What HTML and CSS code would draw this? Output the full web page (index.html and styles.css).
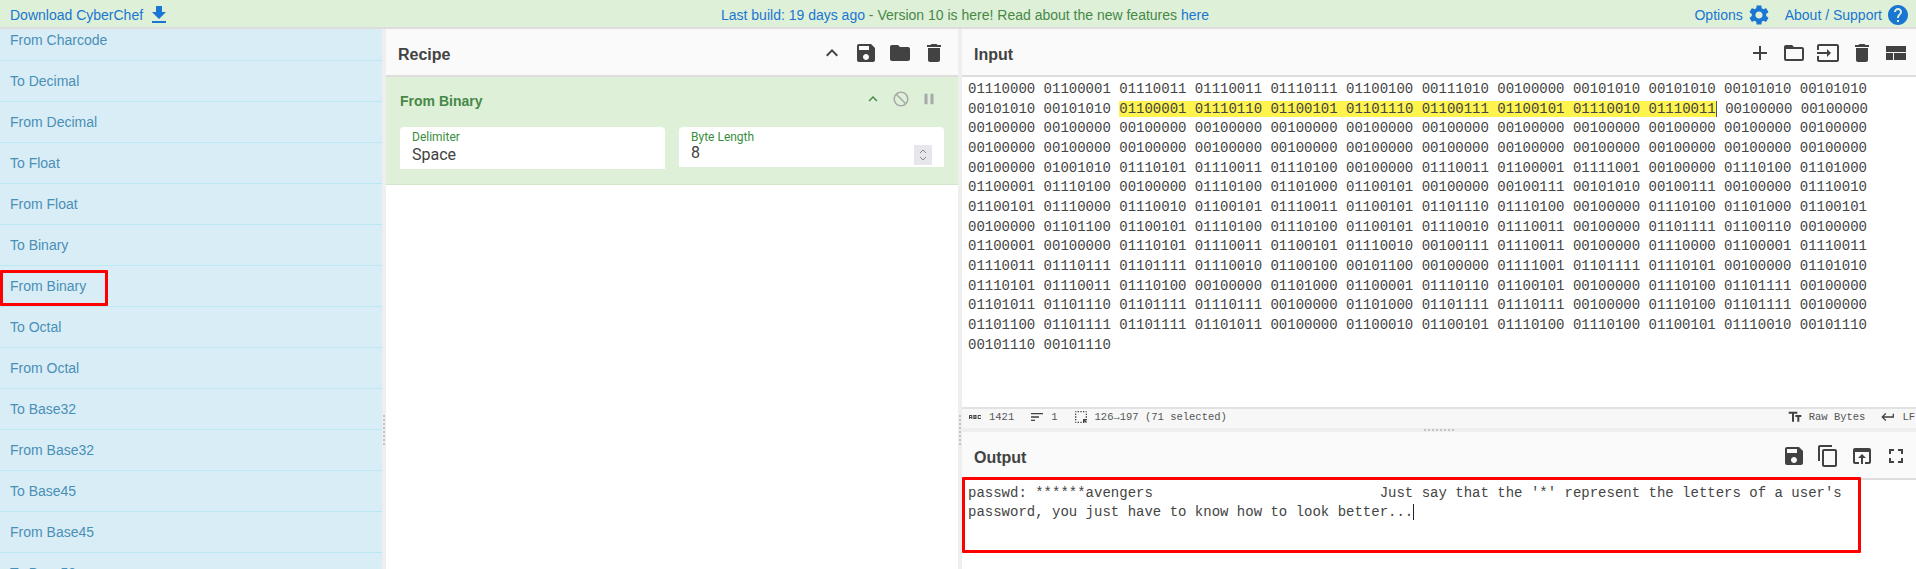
FILE: index.html
```html
<!DOCTYPE html>
<html lang="en">
<head>
<meta charset="utf-8">
<title>CyberChef</title>
<link rel="stylesheet" href="styles.css">
</head>
<body>
<svg class="defs" width="0" height="0" aria-hidden="true">
  <symbol id="i-download" viewBox="0 0 24 24"><path d="M19 9h-4V3H9v6H5l7 7 7-7zM5 18v2h14v-2H5z"/></symbol>
  <symbol id="i-settings" viewBox="0 0 24 24"><path d="M19.14 12.94c.04-.3.06-.61.06-.94 0-.32-.02-.64-.07-.94l2.03-1.58c.18-.14.23-.41.12-.61l-1.92-3.32c-.12-.22-.37-.29-.59-.22l-2.39.96c-.5-.38-1.03-.7-1.62-.94l-.36-2.54c-.04-.24-.24-.41-.48-.41h-3.84c-.24 0-.43.17-.47.41l-.36 2.54c-.59.24-1.13.57-1.62.94l-2.39-.96c-.22-.08-.47 0-.59.22L2.74 8.87c-.12.21-.08.47.12.61l2.03 1.58c-.05.3-.09.63-.09.94s.02.64.07.94l-2.03 1.58c-.18.14-.23.41-.12.61l1.92 3.32c.12.22.37.29.59.22l2.39-.96c.5.38 1.03.7 1.62.94l.36 2.54c.05.24.24.41.48.41h3.84c.24 0 .44-.17.47-.41l.36-2.54c.59-.24 1.13-.56 1.62-.94l2.39.96c.22.08.47 0 .59-.22l1.92-3.32c.12-.22.07-.47-.12-.61l-2.01-1.58zM12 15.6c-1.98 0-3.6-1.62-3.6-3.6s1.62-3.6 3.6-3.6 3.6 1.62 3.6 3.6-1.62 3.6-3.6 3.6z"/></symbol>
  <symbol id="i-help" viewBox="0 0 24 24"><path d="M12 2C6.48 2 2 6.48 2 12s4.48 10 10 10 10-4.48 10-10S17.52 2 12 2zm1 17h-2v-2h2v2zm2.07-7.75l-.9.92C13.45 12.9 13 13.5 13 15h-2v-.5c0-1.1.45-2.1 1.17-2.83l1.24-1.26c.37-.36.59-.86.59-1.41 0-1.1-.9-2-2-2s-2 .9-2 2H8c0-2.21 1.79-4 4-4s4 1.79 4 4c0 .88-.36 1.68-.93 2.25z"/></symbol>
  <symbol id="i-save" viewBox="0 0 24 24"><path d="M17 3H5c-1.11 0-2 .9-2 2v14c0 1.1.89 2 2 2h14c1.1 0 2-.9 2-2V7l-4-4zm-5 16c-1.66 0-3-1.34-3-3s1.34-3 3-3 3 1.34 3 3-1.34 3-3 3zm3-10H5V5h10v4z"/></symbol>
  <symbol id="i-folder" viewBox="0 0 24 24"><path d="M10 4H4c-1.1 0-1.99.9-1.99 2L2 18c0 1.1.9 2 2 2h16c1.1 0 2-.9 2-2V8c0-1.1-.9-2-2-2h-8l-2-2z"/></symbol>
  <symbol id="i-delete" viewBox="0 0 24 24"><path d="M6 19c0 1.1.9 2 2 2h8c1.1 0 2-.9 2-2V7H6v12zM19 4h-3.5l-1-1h-5l-1 1H5v2h14V4z"/></symbol>
  <symbol id="i-up" viewBox="0 0 24 24"><path d="M7.41 15.41L12 10.83l4.59 4.58L18 14l-6-6-6 6z"/></symbol>
  <symbol id="i-disable" viewBox="0 0 24 24"><path d="M12 2C6.48 2 2 6.48 2 12s4.48 10 10 10 10-4.48 10-10S17.52 2 12 2zm0 18c-4.42 0-8-3.58-8-8 0-1.85.63-3.55 1.69-4.9L16.9 18.31C15.55 19.37 13.85 20 12 20zm6.31-3.1L7.1 5.69C8.45 4.63 10.15 4 12 4c4.42 0 8 3.58 8 8 0 1.85-.63 3.55-1.69 4.9z"/></symbol>
  <symbol id="i-pause" viewBox="0 0 24 24"><path d="M6 19h4V5H6v14zm8-14v14h4V5h-4z"/></symbol>
  <symbol id="i-add" viewBox="0 0 24 24"><path d="M19 13h-6v6h-2v-6H5v-2h6V5h2v6h6v2z"/></symbol>
  <symbol id="i-folder-open" viewBox="0 0 24 24"><path d="M20 6h-8l-2-2H4c-1.1 0-1.99.9-1.99 2L2 18c0 1.1.9 2 2 2h16c1.1 0 2-.9 2-2V8c0-1.1-.9-2-2-2zm0 12H4V8h16v10z"/></symbol>
  <symbol id="i-input" viewBox="0 0 24 24"><path d="M21 3.01H3c-1.1 0-2 .9-2 2V9h2V4.99h18v14.03H3V15H1v4.01c0 1.1.9 1.98 2 1.98h18c1.1 0 2-.88 2-1.98v-14c0-1.11-.9-2-2-2zM11 16l4-4-4-4v3H1v2h10v3z"/></symbol>
  <symbol id="i-layout" viewBox="0 0 24 24"><path d="M2 5h20v6H2zM2 12h7v7H2zM10 12h12v7H10z"/></symbol>
  <symbol id="i-copy" viewBox="0 0 24 24"><path d="M16 1H4c-1.1 0-2 .9-2 2v14h2V3h12V1zm3 4H8c-1.1 0-2 .9-2 2v14c0 1.1.9 2 2 2h11c1.1 0 2-.9 2-2V7c0-1.1-.9-2-2-2zm0 16H8V7h11v14z"/></symbol>
  <symbol id="i-open" viewBox="0 0 24 24"><path d="M19 4H5c-1.11 0-2 .9-2 2v12c0 1.1.89 2 2 2h4v-2H5V8h14v10h-4v2h4c1.1 0 2-.9 2-2V6c0-1.1-.89-2-2-2zm-7 6l-4 4h3v6h2v-6h3l-4-4z"/></symbol>
  <symbol id="i-full" viewBox="0 0 24 24"><path d="M7 14H5v5h5v-2H7v-3zm-2-4h2V7h3V5H5v5zm12 7h-3v2h5v-5h-2v3zM14 5v2h3v3h2V5h-5z"/></symbol>
  <symbol id="i-text" viewBox="0 0 24 24"><path d="M2.5 4v3h5v12h3V7h5V4h-13zm19 5h-9v3h3v7h3v-7h3V9z"/></symbol>
  <symbol id="i-return" viewBox="0 0 24 24"><path d="M19 7v4H5.83l3.58-3.59L8 6l-6 6 6 6 1.41-1.41L5.83 13H21V7z"/></symbol>
  <symbol id="i-sort" viewBox="0 0 24 24"><path d="M3 18h6v-2H3v2zM3 6v2h18V6H3zm0 7h12v-2H3v2z"/></symbol>
  <symbol id="i-abc" viewBox="0 0 24 24"><path d="M21 11h-1.5v-.5h-2v3h2V13H21v1c0 .55-.45 1-1 1h-3c-.55 0-1-.45-1-1v-4c0-.55.45-1 1-1h3c.55 0 1 .45 1 1v1zM8 10v5H6.5v-1.5h-2V15H3v-5c0-.55.45-1 1-1h3c.55 0 1 .45 1 1zm-1.5.5h-2V12h2v-1.5zm7 1.5c.55 0 1 .45 1 1v1c0 .55-.45 1-1 1h-4V9h4c.55 0 1 .45 1 1v1c0 .55-.45 1-1 1zM11 10.5v.75h2v-.75h-2zm2 2.25h-2v.75h2v-.75z"/></symbol>
  <symbol id="i-select" viewBox="0 0 24 24"><path d="M17 5h-2V3h2v2zm-2 16h2v-2.59L19.59 21 21 19.59 18.41 17H21v-2h-6v6zm4-12h2V7h-2v2zm0 4h2v-2h-2v2zm-8 8h2v-2h-2v2zM7 5h2V3H7v2zM3 17h2v-2H3v2zm2 4v-2H3c0 1.1.9 2 2 2zM19 3v2h2c0-1.1-.9-2-2-2zm-8 2h2V3h-2v2zM3 9h2V7H3v2zm4 12h2v-2H7v2zm-4-8h2v-2H3v2zm0-8h2V3c-1.1 0-2 .9-2 2z"/></symbol>
</svg>

<header class="banner">
  <div class="banner-left"><a class="link">Download CyberChef</a><svg class="ic ic-download"><use href="#i-download"/></svg></div>
  <div class="banner-center"><span class="link">Last build: 19 days ago</span> - Version 10 is here! Read about the new features <span class="link">here</span></div>
  <div class="banner-right">
    <a class="link">Options</a><svg class="ic ic-banner"><use href="#i-settings"/></svg>
    <a class="link about">About / Support</a><svg class="ic ic-banner"><use href="#i-help"/></svg>
  </div>
</header>

<main class="workspace">
  <nav class="ops">
    <ul class="op-list">
      <li>From Charcode</li>
      <li>To Decimal</li>
      <li>From Decimal</li>
      <li>To Float</li>
      <li>From Float</li>
      <li>To Binary</li>
      <li>From Binary</li>
      <li>To Octal</li>
      <li>From Octal</li>
      <li>To Base32</li>
      <li>From Base32</li>
      <li>To Base45</li>
      <li>From Base45</li>
      <li>To Base58</li>
    </ul>
  </nav>
  <div class="gutter-v"><span class="grip-v"></span></div>

  <section class="recipe">
    <div class="pane-head">
      <h2 class="pane-title">Recipe</h2>
      <div class="tools tools-recipe">
        <svg class="ic ic-24"><use href="#i-up"/></svg>
        <svg class="ic ic-24"><use href="#i-save"/></svg>
        <svg class="ic ic-24"><use href="#i-folder"/></svg>
        <svg class="ic ic-24"><use href="#i-delete"/></svg>
      </div>
    </div>
    <div class="operation">
      <div class="op-head">
        <h3 class="op-title">From Binary</h3>
        <div class="op-tools">
          <svg class="ic ic-op ic-up-small"><use href="#i-up"/></svg>
          <svg class="ic ic-op"><use href="#i-disable"/></svg>
          <svg class="ic ic-op"><use href="#i-pause"/></svg>
        </div>
      </div>
      <div class="op-args">
        <div class="field field-tall">
          <span class="field-label">Delimiter</span>
          <span class="field-value">Space</span>
        </div>
        <div class="field field-short">
          <span class="field-label">Byte Length</span>
          <span class="field-value field-number">8</span>
          <span class="spinner"><svg viewBox="0 0 10 16"><path d="M2 6l3-3 3 3M2 10l3 3 3-3"/></svg></span>
        </div>
      </div>
    </div>
  </section>
  <div class="gutter-v"><span class="grip-v"></span></div>

  <section class="io">
    <div class="pane-head">
      <h2 class="pane-title">Input</h2>
      <div class="tools tools-io">
        <svg class="ic ic-24"><use href="#i-add"/></svg>
        <svg class="ic ic-24"><use href="#i-folder-open"/></svg>
        <svg class="ic ic-24"><use href="#i-input"/></svg>
        <svg class="ic ic-24"><use href="#i-delete"/></svg>
        <svg class="ic ic-24"><use href="#i-layout"/></svg>
      </div>
    </div>
    <div class="code code-input">01110000 01100001 01110011 01110011 01110111 01100100 00111010 00100000 00101010 00101010 00101010 00101010 00101010 00101010 <mark class="sel">01100001 01110110 01100101 01101110 01100111 01100101 01110010 01110011</mark> 00100000 00100000 00100000 00100000 00100000 00100000 00100000 00100000 00100000 00100000 00100000 00100000 00100000 00100000 00100000 00100000 00100000 00100000 00100000 00100000 00100000 00100000 00100000 00100000 00100000 00100000 00100000 01001010 01110101 01110011 01110100 00100000 01110011 01100001 01111001 00100000 01110100 01101000 01100001 01110100 00100000 01110100 01101000 01100101 00100000 00100111 00101010 00100111 00100000 01110010 01100101 01110000 01110010 01100101 01110011 01100101 01101110 01110100 00100000 01110100 01101000 01100101 00100000 01101100 01100101 01110100 01110100 01100101 01110010 01110011 00100000 01101111 01100110 00100000 01100001 00100000 01110101 01110011 01100101 01110010 00100111 01110011 00100000 01110000 01100001 01110011 01110011 01110111 01101111 01110010 01100100 00101100 00100000 01111001 01101111 01110101 00100000 01101010 01110101 01110011 01110100 00100000 01101000 01100001 01110110 01100101 00100000 01110100 01101111 00100000 01101011 01101110 01101111 01110111 00100000 01101000 01101111 01110111 00100000 01110100 01101111 00100000 01101100 01101111 01101111 01101011 00100000 01100010 01100101 01110100 01110100 01100101 01110010 00101110 00101110 00101110</div>
    <div class="status">
      <div class="status-group">
        <svg class="ic ic-status"><use href="#i-abc"/></svg><span>1421</span>
        <svg class="ic ic-status gap-l"><use href="#i-sort"/></svg><span>1</span>
        <svg class="ic ic-status gap-l"><use href="#i-select"/></svg><span>126→197 (71 selected)</span>
      </div>
      <div class="status-group">
        <svg class="ic ic-status"><use href="#i-text"/></svg><span>Raw Bytes</span>
        <svg class="ic ic-status gap-l"><use href="#i-return"/></svg><span>LF</span>
      </div>
    </div>
    <div class="gutter-h"><span class="grip-h"></span></div>
    <div class="pane-head">
      <h2 class="pane-title">Output</h2>
      <div class="tools tools-output">
        <svg class="ic ic-24"><use href="#i-save"/></svg>
        <svg class="ic ic-24"><use href="#i-copy"/></svg>
        <svg class="ic ic-24"><use href="#i-open"/></svg>
        <svg class="ic ic-24"><use href="#i-full"/></svg>
      </div>
    </div>
    <div class="code code-output">passwd: ******avengers                           Just say that the '*' represent the letters of a user's password, you just have to know how to look better...<span class="caret"></span></div>
  </section>
</main>

<div class="mark mark-op"></div>
<div class="mark mark-output"></div>
</body>
</html>
```
FILE: styles.css
```css
* { box-sizing: border-box; }
html, body { margin: 0; padding: 0; height: 569px; overflow: hidden; background: #fff; }
body { font-family: "Liberation Sans", Arial, sans-serif; font-size: 14px; color: #424242; }
.defs { position: absolute; }
.ic { display: block; fill: currentColor; flex: none; }
ul, h2, h3 { margin: 0; padding: 0; }

.banner { height: 29px; display: grid; grid-template-columns: 1fr auto 1fr; align-items: center; background: #dff0d8; border-bottom: 2px solid #ddd; color: #468847; padding: 2px 6px 0 10px; }
.link { color: #1976d2; }
.banner-left, .banner-right { display: flex; align-items: center; }
.banner-center { margin-left: 10px; }
.banner-right { justify-content: flex-end; }
.ic-download { width: 24px; height: 24px; color: #1976d2; margin-left: 4px; }
.ic-banner { width: 24px; height: 24px; color: #1976d2; margin-left: 4px; }
.about { margin-left: 14px; }

.workspace { height: 540px; display: flex; overflow: hidden; }
.ops { width: 382px; flex: none; overflow: hidden; background: #d9edf7; }
.op-list { list-style: none; margin-top: -9px; }
.op-list li { height: 41px; padding: 10px 10px 0; line-height: 20px; color: #4a8fb5; border-bottom: 1px solid #bce8f1; }

.gutter-v { width: 4px; flex: none; background: #eee; position: relative; }
.grip-v { position: absolute; left: 1px; top: 386px; width: 2px; height: 30px; background: repeating-linear-gradient(#c4c4c4 0 2px, transparent 2px 4px); }

.recipe { width: 572px; flex: none; display: flex; flex-direction: column; }
.pane-head { height: 48px; flex: none; display: flex; align-items: center; justify-content: space-between; background: #fafafa; border-bottom: 2px solid #ddd; padding: 2px 0 0 12px; }
.pane-title { font-size: 16px; font-weight: 700; color: #424242; margin-top: 4px; }
.tools { display: flex; color: #424242; }
.ic-24 { width: 24px; height: 24px; }
.tools-recipe { gap: 10px; padding-right: 12px; }
.tools-io { gap: 10px; padding-right: 8px; }
.tools-output { gap: 10px; padding-right: 8px; }

.operation { background: #dff0d8; height: 108px; padding: 0 14px; border-bottom: 1px solid #d2e6ca; }
.op-head { height: 48px; margin-bottom: 2px; display: flex; align-items: center; justify-content: space-between; }
.op-title { font-size: 14px; font-weight: 700; color: #468847; }
.op-tools { display: flex; align-items: center; gap: 10px; color: #a8a8a8; margin-bottom: 4px; padding-right: 6px; }
.ic-op { width: 18px; height: 18px; }
.ic-up-small { color: #468847; }
.op-args { display: flex; gap: 14px; align-items: flex-start; }
.field { flex: 1 1 0; background: #fff; border-radius: 4px 4px 0 0; padding: 3px 12px 0; position: relative; display: flex; flex-direction: column; }
.field-tall { height: 42px; }
.field-short { height: 40px; }
.field-label { font-family: Roboto, sans-serif; font-size: 12px; line-height: 14px; color: #388e3c; }
.field-value { font-family: Roboto, sans-serif; font-size: 16px; line-height: 22px; color: #424242; }
.field-number { line-height: 18px; }
.spinner { position: absolute; right: 12px; top: 18px; width: 18px; height: 20px; background: #e6e6ec; display: flex; justify-content: center; }
.spinner svg { width: 10px; height: 20px; fill: none; stroke: #888; stroke-width: 1; }

.io { flex: 1 1 0; min-width: 0; display: flex; flex-direction: column; }
.code { font-family: "Liberation Mono", monospace; font-size: 14px; line-height: 19.65px; padding: 3px 40px 0 6px; white-space: pre-wrap; word-break: normal; color: #444; }
.code-input { height: 330px; flex: none; }
.code-output { flex: 1 1 0; padding-top: 4px; line-height: 18.7px; }
.sel { background: #fff34d; color: inherit; border-right: 1px solid #555; padding: 0; }
.caret { display: inline-block; width: 1px; height: 16px; background: #222; vertical-align: text-bottom; }

.status { height: 21px; flex: none; display: flex; justify-content: space-between; align-items: center; background: #f7f7f7; border-top: 2px solid #e2e2e2; font-family: "Liberation Mono", monospace; font-size: 10.5px; color: #555; padding: 0 1px 3px 5px; }
.status-group { display: flex; align-items: center; gap: 6px; }
.ic-status { width: 16px; height: 16px; color: #424242; }
.gap-l { margin-left: 9px; }

.gutter-h { height: 4px; flex: none; background: #eee; display: flex; justify-content: center; }
.grip-h { width: 30px; height: 2px; margin-top: 1px; background: repeating-linear-gradient(90deg, #c4c4c4 0 2px, transparent 2px 4px); }

.mark { position: absolute; border: 3px solid #f00; border-radius: 1px; pointer-events: none; }
.mark-op { left: 0; top: 270px; width: 108px; height: 36px; }
.mark-output { left: 962px; top: 477px; width: 899px; height: 76px; }
```
